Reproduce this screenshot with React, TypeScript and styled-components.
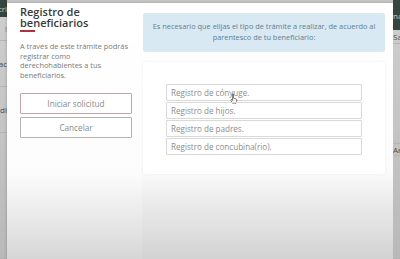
import React from 'react'
import styled, { createGlobalStyle } from 'styled-components'

const GlobalStyle = createGlobalStyle`
  html, body {
    margin: 0;
    padding: 0;
    overflow: hidden;
    background: #c9c9c9;
  }
  * { box-sizing: border-box; }
`

const options = [
  'Registro de cónyuge.',
  'Registro de hijos.',
  'Registro de padres.',
  'Registro de concubina(rio).',
]

const intro = [
  'A través de este trámite podrás',
  'registrar como',
  'derechohabientes a tus',
  'beneficiarios.',
]

export default function App() {
  return (
    <>
      <GlobalStyle />
      <Page>
        <Peek>
          <PeekHeader $h={17} $end>
            <PeekText $light>Inscri</PeekText>
          </PeekHeader>
          <PeekRow $h={24} $end>
            <PeekText $tone="#b46a5c">!</PeekText>
          </PeekRow>
          <PeekRow $h={46} $end>
            <PeekText>Direcac</PeekText>
          </PeekRow>
          <PeekRow $h={46} $end>
            <PeekText>Bajadi</PeekText>
          </PeekRow>
          <PeekRow $h={126} />
        </Peek>

        <Modal>
          <Side>
            <Title>Registro de beneficiarios</Title>
            <TitleLine />
            <Description>
              {intro.map(line => (
                <DescLine key={line}>{line}</DescLine>
              ))}
            </Description>
            <Actions>
              <ActionButton $accent>Iniciar solicitud</ActionButton>
              <ActionButton>Cancelar</ActionButton>
            </Actions>
          </Side>

          <Main>
            <Notice>
              Es necesario que elijas el tipo de trámite a realizar, de acuerdo al
              parentesco de tu beneficiario:
            </Notice>
            <Card>
              <OptionList>
                {options.map((o, i) => (
                  <Option key={o}>
                    {o}
                    {i === 0 && (
                      <Cursor viewBox="0 0 12 14" aria-hidden>
                        <path
                          d="M3.5 1.2c.6 0 1 .4 1 1v4.3l.3-.1c.5-.2 1 .1 1.1.5l.1.2.3-.1c.5-.1.9.1 1.1.5l.1.2.3-.1c.6-.1 1.1.3 1.1.9v2.6c0 1.8-1.3 3.2-3.1 3.2H5.4c-.9 0-1.7-.5-2.2-1.2L1.2 9.7c-.3-.5-.2-1 .3-1.3.4-.2.9-.1 1.2.3l.8 1V2.2c0-.6.4-1 1-1z"
                          fill="#fff"
                          stroke="#333"
                          strokeWidth="0.9"
                          strokeLinejoin="round"
                        />
                      </Cursor>
                    )}
                  </Option>
                ))}
              </OptionList>
            </Card>
          </Main>
        </Modal>

        <Peek>
          <PeekHeader $h={30}>
            <PeekText $light>nac</PeekText>
          </PeekHeader>
          <PeekRow $h={14}>
            <PeekText>Sa</PeekText>
          </PeekRow>
          <PeekRow $h={100} />
          <PeekRow $h={12}>
            <PeekText>Ar</PeekText>
          </PeekRow>
          <PeekRow $h={103} />
        </Peek>
      </Page>
    </>
  )
}

const Page = styled.div`
  display: flex;
  width: 400px;
  height: 259px;
  font-family: 'Open Sans', 'Liberation Sans', sans-serif;
  background: #c8c8c8;
`

const Peek = styled.div`
  width: 7px;
  flex: none;
  display: flex;
  flex-direction: column;
  overflow: hidden;
  background: linear-gradient(to bottom, #cfcfcf, #b9b9b9);
`

const PeekHeader = styled.div<{ $h: number; $end?: boolean }>`
  height: ${p => p.$h}px;
  flex: none;
  background: #35453f;
  display: flex;
  align-items: center;
  justify-content: ${p => (p.$end ? 'flex-end' : 'flex-start')};
  overflow: hidden;
`

const PeekRow = styled.div<{ $h: number; $end?: boolean }>`
  height: ${p => p.$h}px;
  flex: none;
  display: flex;
  align-items: center;
  justify-content: ${p => (p.$end ? 'flex-end' : 'flex-start')};
  overflow: hidden;
  border-bottom: 1px solid #b4b4b4;
`

const PeekText = styled.span<{ $light?: boolean; $tone?: string }>`
  flex: none;
  white-space: nowrap;
  font-size: 8px;
  color: ${p => (p.$light ? '#c9d2cd' : p.$tone || '#4d4d4d')};
`

const Modal = styled.div`
  flex: 1;
  margin-top: 3px;
  display: flex;
  background: linear-gradient(to bottom, #fff 0, #fcfcfc 170px, #e9e9e9 215px, #d6d6d6 256px);
  box-shadow: 0 0 3px rgba(0, 0, 0, 0.25);
`

const Side = styled.div`
  width: 135px;
  flex: none;
  padding: 4px 2px 0 13px;
  display: flex;
  flex-direction: column;
`

const Title = styled.h2`
  margin: 0;
  width: 90px;
  font-size: 11px;
  line-height: 10.5px;
  font-weight: 600;
  color: #3a3a3a;
`

const TitleLine = styled.div`
  width: 15px;
  height: 2px;
  margin-top: 2px;
  background: #b0323d;
`

const Description = styled.p`
  margin: 10px 0 0;
  font-size: 7.4px;
  line-height: 9.7px;
  color: #7a7a7a;
`

const DescLine = styled.span`
  display: block;
  white-space: nowrap;
`

const Actions = styled.div`
  margin-top: 12px;
  display: flex;
  flex-direction: column;
  gap: 3px;
`

const ActionButton = styled.button<{ $accent?: boolean }>`
  height: 21px;
  width: 112px;
  padding: 0;
  font-family: inherit;
  font-size: 8.2px;
  color: #8a8a8a;
  background: #fff;
  border: 1.5px solid ${p => (p.$accent ? '#c2a4a9' : '#b4b4b4')};
  border-radius: 1px;
`

const Main = styled.div`
  flex: 1;
  padding: 10px 8px 0 1px;
  display: flex;
  flex-direction: column;
  gap: 10px;
  background: linear-gradient(to bottom, rgba(0, 0, 0, 0) 150px, rgba(0, 0, 0, 0.02) 200px);
`

const Notice = styled.div`
  height: 39px;
  padding: 8px 8px 0;
  background: #d8e9f4;
  border-radius: 2px;
  text-align: center;
  font-size: 7.4px;
  line-height: 11px;
  color: #62808e;
`

const Card = styled.div`
  height: 112px;
  padding: 22px 23px 0;
  background: #fff;
  box-shadow: 0 0 3px rgba(0, 0, 0, 0.06);
`

const OptionList = styled.div`
  display: flex;
  flex-direction: column;
  gap: 1.5px;
`

const Option = styled.div`
  position: relative;
  height: 16.5px;
  padding-left: 4px;
  display: flex;
  align-items: center;
  font-size: 8.1px;
  color: #8c8c8c;
  border: 1px solid #d9d9d9;
  border-radius: 1px;
`

const Cursor = styled.svg`
  position: absolute;
  left: 63px;
  top: 8px;
  width: 9px;
  height: 11px;
`
